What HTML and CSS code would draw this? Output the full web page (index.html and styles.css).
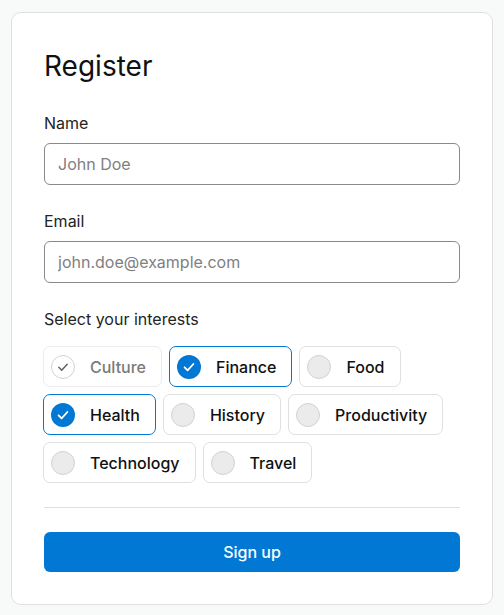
FILE: index.html
```html
<!DOCTYPE html>
<html lang="en">
<head>
<meta charset="utf-8">
<title>Register</title>
<link rel="stylesheet" href="styles.css">
</head>
<body>
<main class="card">
  <h1 class="title">Register</h1>
  <label class="label label-first" for="name">Name</label>
  <input class="input" id="name" type="text" placeholder="John Doe">
  <label class="label" for="email">Email</label>
  <input class="input" id="email" type="email" placeholder="john.doe@example.com">
  <div class="label label-interests">Select your interests</div>
  <div class="chips">
    <span class="chip chip-disabled">
      <svg class="mark" viewBox="0 0 24 24" width="24" height="24"><circle cx="12" cy="12" r="11.5" fill="#fff" stroke="#d1d1d1"/><path d="M7.8 12.3l2.9 2.9 5.5-6" fill="none" stroke="#616161" stroke-width="1.5" stroke-linecap="round" stroke-linejoin="round"/></svg>
      <span class="chip-text">Culture</span>
    </span>
    <span class="chip chip-on">
      <svg class="mark" viewBox="0 0 24 24" width="24" height="24"><circle cx="12" cy="12" r="12" fill="#0078d4"/><path d="M7.6 12.3l3 3 5.8-6.3" fill="none" stroke="#fff" stroke-width="1.8" stroke-linecap="round" stroke-linejoin="round"/></svg>
      <span class="chip-text">Finance</span>
    </span>
    <span class="chip">
      <svg class="mark" viewBox="0 0 24 24" width="24" height="24"><circle cx="12" cy="12" r="11.5" fill="#ebebeb" stroke="#d1d1d1"/></svg>
      <span class="chip-text">Food</span>
    </span>
    <span class="chip chip-on">
      <svg class="mark" viewBox="0 0 24 24" width="24" height="24"><circle cx="12" cy="12" r="12" fill="#0078d4"/><path d="M7.6 12.3l3 3 5.8-6.3" fill="none" stroke="#fff" stroke-width="1.8" stroke-linecap="round" stroke-linejoin="round"/></svg>
      <span class="chip-text">Health</span>
    </span>
    <span class="chip">
      <svg class="mark" viewBox="0 0 24 24" width="24" height="24"><circle cx="12" cy="12" r="11.5" fill="#ebebeb" stroke="#d1d1d1"/></svg>
      <span class="chip-text">History</span>
    </span>
    <span class="chip">
      <svg class="mark" viewBox="0 0 24 24" width="24" height="24"><circle cx="12" cy="12" r="11.5" fill="#ebebeb" stroke="#d1d1d1"/></svg>
      <span class="chip-text">Productivity</span>
    </span>
    <span class="chip">
      <svg class="mark" viewBox="0 0 24 24" width="24" height="24"><circle cx="12" cy="12" r="11.5" fill="#ebebeb" stroke="#d1d1d1"/></svg>
      <span class="chip-text">Technology</span>
    </span>
    <span class="chip">
      <svg class="mark" viewBox="0 0 24 24" width="24" height="24"><circle cx="12" cy="12" r="11.5" fill="#ebebeb" stroke="#d1d1d1"/></svg>
      <span class="chip-text">Travel</span>
    </span>
  </div>
  <hr class="divider">
  <button class="submit" type="button">Sign up</button>
</main>
</body>
</html>
```
FILE: styles.css
```css
* { box-sizing: border-box; }
html, body { margin: 0; }
body {
  background: #f8fafa;
  padding: 12px 11px 10px;
  font-family: Inter, "Noto Sans", sans-serif;
  color: #242424;
}
.card {
  width: 482px;
  background: #fff;
  border: 1px solid #e0e0e0;
  border-radius: 10px;
  padding: 32px;
  display: flex;
  flex-direction: column;
}
.title {
  margin: 4px 0 0;
  font-size: 28px;
  line-height: 34px;
  font-weight: 400;
  color: #111;
}
.label {
  display: block;
  font-size: 16px;
  line-height: 19px;
  margin: 27px 0 10px;
}
.label-first { margin-top: 31px; }
.label-interests { margin-bottom: 17px; }
.input {
  display: block;
  width: 100%;
  height: 42px;
  border: 1px solid #8a8a8a;
  border-radius: 6px;
  padding: 0 13px;
  font-family: inherit;
  font-size: 16px;
  color: #242424;
  background: #fff;
  outline: none;
}
.input::placeholder { color: #808080; }
.chips {
  display: flex;
  flex-wrap: wrap;
  gap: 7px;
  margin-left: -1px;
}
.chip {
  display: inline-flex;
  align-items: center;
  height: 41px;
  padding: 0 15px 0 7px;
  border: 1px solid #e0e0e0;
  border-radius: 7px;
  gap: 15px;
  font-size: 16px;
  font-weight: 500;
  color: #111;
  background: #fff;
}
.chip-on { border-color: #0078d4; }
.chip-disabled { border-color: #ececec; color: #7a7a7a; }
.mark { display: block; flex: none; }
.divider {
  border: 0;
  border-top: 1px solid #e0e0e0;
  margin: 24px 0;
  height: 0;
}
.submit {
  height: 40px;
  border: 0;
  border-radius: 6px;
  background: #0078d4;
  color: #fff;
  font-family: inherit;
  font-size: 16px;
  font-weight: 500;
}
```
